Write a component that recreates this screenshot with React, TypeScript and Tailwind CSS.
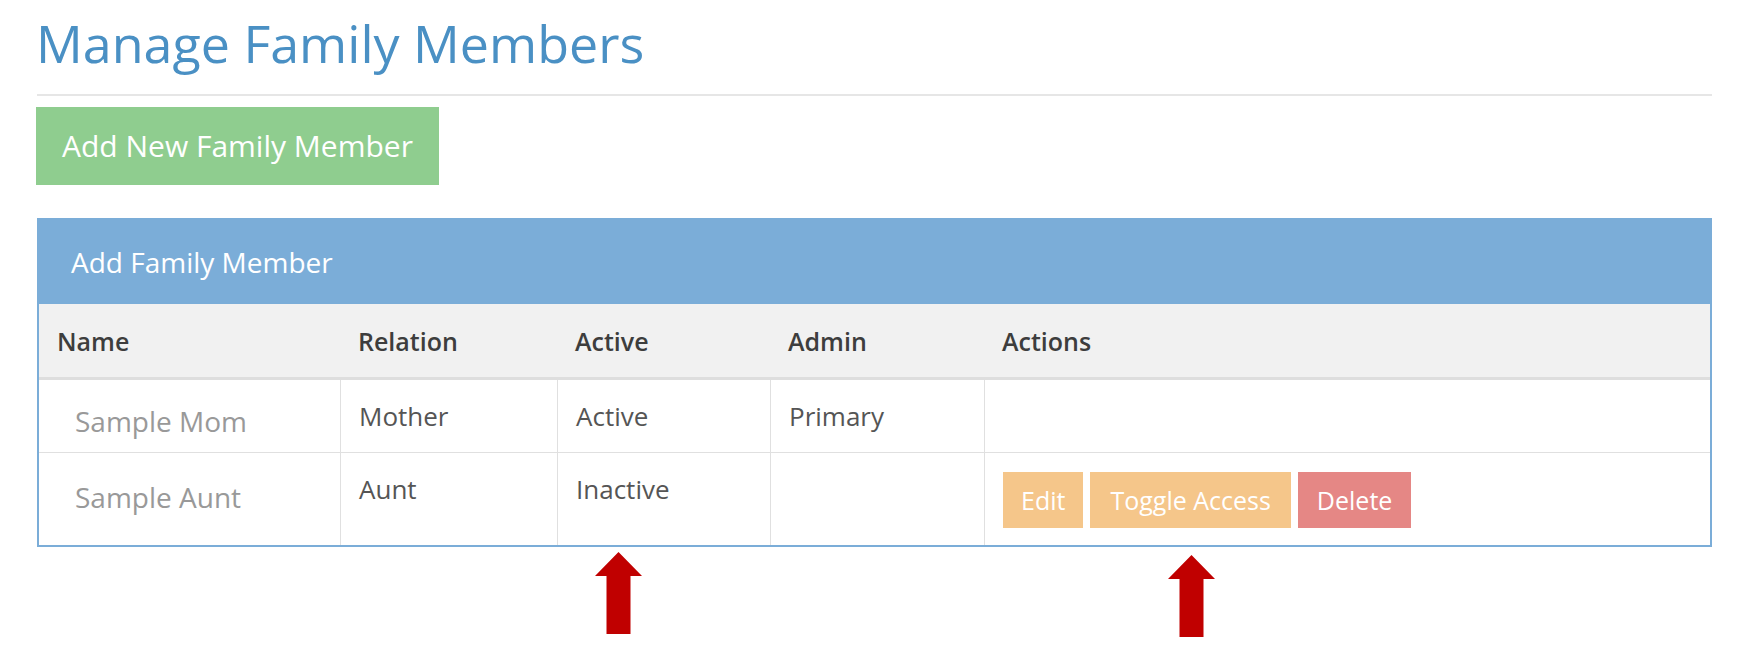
import React from 'react';

type Member = {
  name: string;
  relation: string;
  active: string;
  admin: string;
  showActions: boolean;
};

const members: Member[] = [
  { name: 'Sample Mom', relation: 'Mother', active: 'Active', admin: 'Primary', showActions: false },
  { name: 'Sample Aunt', relation: 'Aunt', active: 'Inactive', admin: '', showActions: true },
];

const cols = 'grid grid-cols-[301px_217px_213px_214px_1fr]';

const UpArrow: React.FC<{ className?: string }> = ({ className }) => (
  <svg className={className} width="47" height="82" viewBox="0 0 47 82">
    <polygon points="23.5,0 47,24 35.5,24 35.5,82 11.5,82 11.5,24 0,24" fill="#c00000" />
  </svg>
);

export default function App() {
  return (
    <div className="min-h-[650px] bg-white pl-[37px] pr-[30px] pt-[15px] font-['Open_Sans',sans-serif]">
      <h1 className="text-[52px] leading-[56px] text-[#4a90c4] font-normal -ml-[1px]">Manage Family Members</h1>
      <div className="mt-[23px] h-[2px] bg-[#e6e6e6]" />

      <button className="mt-[11px] h-[78px] px-[26px] bg-[#8fcd8f] text-white text-[30px] leading-[40px] flex items-center -ml-[1px]">
        Add New Family Member
      </button>

      <div className="mt-[33px] border-2 border-[#7badd8]">
        <div className="h-[84px] bg-[#7badd8] flex items-center px-[32px] text-white text-[28px] leading-[40px]">
          Add Family Member
        </div>

        <div className={`${cols} h-[76px] bg-[#f1f1f1] border-b-[3px] border-[#dedede] text-[25px] leading-[37px] font-semibold text-[#3d3d3d]`}>
          {['Name', 'Relation', 'Active', 'Admin', 'Actions'].map((h) => (
            <div key={h} className="px-[18px] pt-[19px]">
              {h}
            </div>
          ))}
        </div>

        {members.map((m, i) => (
          <div
            key={m.name}
            className={`${cols} text-[26px] leading-[37px] text-[#555] ${i === 0 ? 'h-[73px] border-b border-[#e0e0e0]' : 'h-[92px]'}`}
          >
            <div className={`pl-[36px] text-[28px] leading-[40px] text-[#999] ${i === 0 ? 'pt-[21px]' : 'pt-[24px]'}`}>
              {m.name}
            </div>
            <div className="border-l border-[#e0e0e0] px-[18px] pt-[18px]">{m.relation}</div>
            <div className="border-l border-[#e0e0e0] px-[18px] pt-[18px]">{m.active}</div>
            <div className="border-l border-[#e0e0e0] px-[18px] pt-[18px]">{m.admin}</div>
            <div className="border-l border-[#e0e0e0] px-[18px] pt-[19px]">
              {m.showActions && (
                <div className="flex gap-[7px] text-[25px] leading-[34px] text-white">
                  <button className="h-[56px] px-[18px] bg-[#f5c68a]">Edit</button>
                  <button className="h-[56px] px-[20px] bg-[#f5c68a]">Toggle Access</button>
                  <button className="h-[56px] px-[19px] bg-[#e58785]">Delete</button>
                </div>
              )}
            </div>
          </div>
        ))}
      </div>

      {/* annotation arrows */}
      <div className="relative h-[100px]">
        <UpArrow className="absolute left-[558px] top-[5px]" />
        <UpArrow className="absolute left-[1131px] top-[8px]" />
      </div>
    </div>
  );
}
